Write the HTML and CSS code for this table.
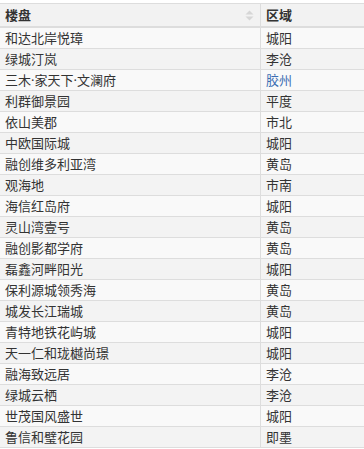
FILE: index.html
```html
<!DOCTYPE html>
<html lang="zh">
<head>
<meta charset="utf-8">
<link rel="stylesheet" href="styles.css">
</head>
<body>
<table class="grid">
  <thead>
    <tr>
      <th class="col-name"><span>楼盘</span>
        <svg class="sort" width="9" height="11" viewBox="0 0 9 11"><path d="M4.5 0.5 L8.5 4.5 L0.5 4.5 Z M4.5 10.5 L8.5 6.5 L0.5 6.5 Z" fill="#d6d6d6"/></svg>
      </th>
      <th class="col-area">区域</th>
    </tr>
  </thead>
  <tbody>
    <tr><td>和达北岸悦璋</td><td>城阳</td></tr>
    <tr><td>绿城汀岚</td><td>李沧</td></tr>
    <tr><td>三木·家天下·文澜府</td><td class="link">胶州</td></tr>
    <tr><td>利群御景园</td><td>平度</td></tr>
    <tr><td>依山美郡</td><td>市北</td></tr>
    <tr><td>中欧国际城</td><td>城阳</td></tr>
    <tr><td>融创维多利亚湾</td><td>黄岛</td></tr>
    <tr><td>观海地</td><td>市南</td></tr>
    <tr><td>海信红岛府</td><td>城阳</td></tr>
    <tr><td>灵山湾壹号</td><td>黄岛</td></tr>
    <tr><td>融创影都学府</td><td>黄岛</td></tr>
    <tr><td>磊鑫河畔阳光</td><td>城阳</td></tr>
    <tr><td>保利源城领秀海</td><td>黄岛</td></tr>
    <tr><td>城发长江瑞城</td><td>黄岛</td></tr>
    <tr><td>青特地铁花屿城</td><td>城阳</td></tr>
    <tr><td>天一仁和珑樾尚璟</td><td>城阳</td></tr>
    <tr><td>融海致远居</td><td>李沧</td></tr>
    <tr><td>绿城云栖</td><td>李沧</td></tr>
    <tr><td>世茂国风盛世</td><td>城阳</td></tr>
    <tr><td>鲁信和璧花园</td><td>即墨</td></tr>
  </tbody>
</table>
</body>
</html>
```
FILE: styles.css
```css
html, body {
  margin: 0;
  padding: 0;
  background: #ffffff;
}
.grid {
  margin-top: 3px;
  width: 364px;
  border-collapse: collapse;
  table-layout: fixed;
  font-family: "Noto Sans", "Noto Sans CJK SC", sans-serif;
  font-size: 13px;
  color: #333333;
}
.grid th, .grid td {
  padding: 0 5px;
  text-align: left;
  white-space: nowrap;
  overflow: hidden;
}
.grid thead tr {
  background: #f2f2f2;
  border-top: 1px solid #dddddd;
  border-bottom: 2px solid #dddddd;
}
.grid th {
  height: 22px;
  line-height: 22px;
  font-weight: bold;
  color: #333333;
}
.col-name {
  width: 250px;
  border-right: 1px solid #dddddd;
  position: relative;
}
.col-area {
  width: auto;
}
.sort {
  position: absolute;
  right: 6px;
  top: 6px;
}
.grid td {
  height: 20px;
  line-height: 20px;
  border-bottom: 1px solid #dddddd;
}
.grid td:first-child {
  border-right: 1px solid #dddddd;
}
.grid tbody tr:nth-child(odd) {
  background: #f9f9f9;
}
.grid tbody tr:nth-child(even) {
  background: #f3f3f3;
}
.link {
  color: #3b6db3;
}
```
